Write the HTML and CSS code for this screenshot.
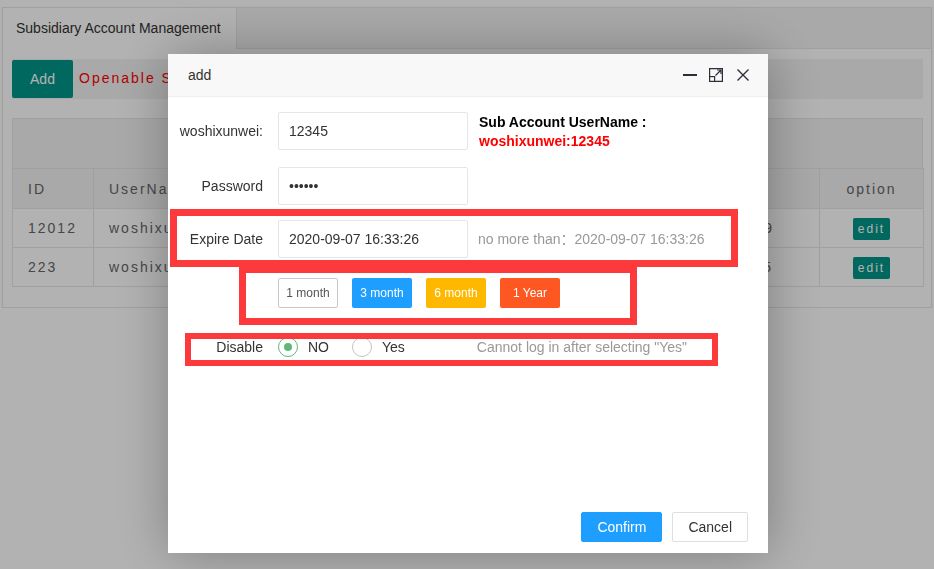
FILE: index.html
```html
<!DOCTYPE html>
<html>
<head>
    <meta name="viewport" content="width=device-width, initial-scale=1.0">
    <title>Subsidiary Account Management</title>
    <link rel="stylesheet" href="styles.css">
</head>
<body>
    <!-- Page behind the dialog -->
    <div class="card">
        <div class="tab-bar">
            <div class="tab active">Subsidiary Account Management</div>
        </div>
        <div class="card-body">
            <div class="toolbar">
                <button class="btn-add">Add</button>
                <span class="notice">Openable Subaccount Number: 10&nbsp;&nbsp;&nbsp;&nbsp;Main Account Expire Date: 2020-09-07 16:33:26</span>
            </div>

            <div class="grid-top"></div>
            <table class="grid">
                <colgroup>
                    <col style="width: 81px">
                    <col style="width: 250px">
                    <col style="width: 247px">
                    <col style="width: 229px">
                    <col style="width: 104px">
                </colgroup>
                <thead>
                    <tr>
                        <th>ID</th>
                        <th>UserName</th>
                        <th>Remark</th>
                        <th></th>
                        <th class="center">option</th>
                    </tr>
                </thead>
                <tbody>
                    <tr>
                        <td>12012</td>
                        <td>woshixunwei:888</td>
                        <td>test</td>
                        <td>2020-09-05 16:32:39</td>
                        <td class="center"><button class="btn-edit">edit</button></td>
                    </tr>
                    <tr>
                        <td>223</td>
                        <td>woshixunwei:666</td>
                        <td>test</td>
                        <td>2020-09-04 10:11:45</td>
                        <td class="center"><button class="btn-edit">edit</button></td>
                    </tr>
                </tbody>
            </table>
        </div>
    </div>

    <div class="shade"></div>

    <!-- Add dialog -->
    <div class="dialog">
        <div class="dlg-title">
            <span>add</span>
            <div class="dlg-tools">
                <svg width="14" height="14" viewBox="0 0 14 14"><rect x="0" y="6" width="14" height="2" fill="#2e2d3c"/></svg>
                <svg width="14" height="14" viewBox="0 0 14 14" fill="none" stroke="#2e2d3c" stroke-width="1.2">
                    <path d="M0.6 8 V0.6 H13.4 V13.4 H5.6"/>
                    <rect x="0.6" y="8.6" width="5" height="4.8"/>
                    <path d="M6.5 7.5 L12 2 M8 2 H12 V6"/>
                </svg>
                <svg width="12" height="12" viewBox="0 0 12 12" stroke="#2e2d3c" stroke-width="1.4"><path d="M0.5 0.5 L11.5 11.5 M11.5 0.5 L0.5 11.5"/></svg>
            </div>
        </div>

        <div class="dlg-body">
            <div class="form-row row-user">
                <label class="form-label">woshixunwei:</label>
                <input class="form-input" type="text" value="12345">
                <div class="sub-name">
                    <div>Sub Account UserName :</div>
                    <div class="sub-value">woshixunwei:12345</div>
                </div>
            </div>
            <div class="form-row row-pass">
                <label class="form-label">Password</label>
                <input class="form-input" type="password" value="123456">
            </div>
            <div class="form-row row-date">
                <label class="form-label">Expire Date</label>
                <input class="form-input" type="text" value="2020-09-07 16:33:26">
                <span class="form-hint">no more than：2020-09-07 16:33:26</span>
            </div>
            <div class="form-row row-quick">
                <button class="btn-sm plain">1 month</button>
                <button class="btn-sm blue">3 month</button>
                <button class="btn-sm orange">6 month</button>
                <button class="btn-sm red">1 Year</button>
            </div>
            <div class="form-row row-disable">
                <label class="form-label">Disable</label>
                <span class="radio checked"><i></i>NO</span>
                <span class="radio"><i></i>Yes</span>
                <span class="form-hint radio-hint">Cannot log in after selecting "Yes"</span>
            </div>

            <!-- red marks drawn on the screenshot -->
            <div class="mark mark-date"></div>
            <div class="mark mark-quick"></div>
            <div class="mark mark-disable"></div>
        </div>

        <div class="dlg-foot">
            <button class="btn-confirm">Confirm</button>
            <button class="btn-cancel">Cancel</button>
        </div>
    </div>
</body>
</html>
```

FILE: styles.css
```css
body {
    margin: 0;
    background-color: #fff;
    font-family: "Liberation Sans", Arial, "Noto Sans CJK SC", sans-serif;
    font-size: 14px;
    color: #333;
}

button {
    font-family: inherit;
    cursor: pointer;
}

/* Card behind the shade */
.card {
    margin: 7px 2px 0;
    border: 1px solid #e6e6e6;
    background-color: #fff;
    box-shadow: 0 1px 2px rgba(0, 0, 0, 0.08);
}

.tab-bar {
    height: 40px;
    background-color: #f2f2f2;
    border-bottom: 1px solid #e6e6e6;
    display: flex;
}

.tab {
    padding: 0 15px 0 13px;
    line-height: 40px;
    color: #333;
}

.tab.active {
    background-color: #fff;
    border-right: 1px solid #e6e6e6;
    height: 41px;
}

.card-body {
    padding: 10px 8px 20px 9px;
}

.toolbar {
    height: 40px;
    background-color: #f2f2f2;
    display: flex;
    align-items: center;
}

.btn-add {
    height: 38px;
    width: 61px;
    border: none;
    border-radius: 2px;
    background-color: #009688;
    color: #fff;
    font-size: 14px;
}

.notice {
    margin-left: 6px;
    margin-top: -3px;
    color: #ff0000;
    letter-spacing: 2px;
}

.grid-top {
    margin-top: 19px;
    height: 49px;
    background-color: #f2f2f2;
    border: 1px solid #e6e6e6;
    border-bottom: none;
}

.grid {
    width: 100%;
    border-collapse: collapse;
    table-layout: fixed;
    color: #666;
    letter-spacing: 2px;
}

.grid th, .grid td {
    border: 1px solid #e6e6e6;
    padding: 5px 15px;
    line-height: 28px;
    text-align: left;
    font-weight: normal;
    white-space: nowrap;
    overflow: hidden;
}

.grid th {
    background-color: #f2f2f2;
    padding: 6px 15px 5px;
}

.grid .center {
    text-align: center;
}

.btn-edit {
    height: 22px;
    padding: 0 5px;
    border: none;
    border-radius: 2px;
    background-color: #009688;
    color: #fff;
    font-size: 12px;
    letter-spacing: 2px;
    vertical-align: middle;
}

/* Shade and dialog */
.shade {
    position: fixed;
    top: 0;
    left: 0;
    right: 0;
    bottom: 0;
    background-color: rgba(0, 0, 0, 0.3);
}

.dialog {
    position: fixed;
    left: 168px;
    top: 54px;
    width: 600px;
    height: 499px;
    background-color: #fff;
    box-shadow: 1px 1px 50px rgba(0, 0, 0, 0.3);
    display: flex;
    flex-direction: column;
}

.dlg-title {
    height: 42px;
    background-color: #f8f8f8;
    border-bottom: 1px solid #eee;
    padding: 0 19px 0 20px;
    display: flex;
    align-items: center;
    justify-content: space-between;
    color: #333;
}

.dlg-tools {
    display: flex;
    align-items: center;
    gap: 12px;
}

.dlg-tools svg:last-child {
    margin-left: 2px;
}

.dlg-body {
    flex: 1;
    position: relative;
    padding-top: 15px;
}

.form-row {
    display: flex;
    align-items: flex-start;
}

.row-user {
    height: 38px;
    margin-bottom: 17px;
}

.row-pass {
    margin-bottom: 15px;
}

.row-date {
    margin-bottom: 20px;
}

.row-quick {
    padding-left: 110px;
    gap: 14px;
    margin-bottom: 20px;
}

.form-label {
    width: 95px;
    margin-right: 15px;
    text-align: right;
    line-height: 38px;
    color: #333;
}

.form-input {
    width: 190px;
    height: 38px;
    box-sizing: border-box;
    border: 1px solid #e6e6e6;
    border-radius: 2px;
    padding: 0 10px;
    font-family: inherit;
    font-size: 14px;
    color: #333;
    outline: none;
}

.sub-name {
    margin-left: 11px;
    padding-top: 1px;
    line-height: 19px;
    font-weight: bold;
    color: #000;
}

.sub-value {
    color: #ff0000;
}

.form-hint {
    margin-left: 10px;
    line-height: 38px;
    color: #999;
}

.btn-sm {
    width: 60px;
    height: 30px;
    padding: 0;
    border: 1px solid transparent;
    border-radius: 2px;
    font-size: 12px;
    color: #fff;
}

.btn-sm.plain {
    background-color: #fff;
    border-color: #c9c9c9;
    color: #555;
}

.btn-sm.blue {
    background-color: #1e9fff;
}

.btn-sm.orange {
    background-color: #ffb800;
}

.btn-sm.red {
    background-color: #ff5722;
}

.row-disable {
    align-items: center;
    height: 38px;
}

.radio {
    display: flex;
    align-items: center;
    margin-right: 23px;
    color: #333;
}

.radio i {
    width: 18px;
    height: 18px;
    border: 1px solid #c2c2c2;
    border-radius: 50%;
    margin-right: 10px;
    position: relative;
}

.radio.checked i {
    border-color: #5fb878;
}

.radio.checked i::after {
    content: "";
    position: absolute;
    left: 5px;
    top: 5px;
    width: 8px;
    height: 8px;
    border-radius: 50%;
    background-color: #5fb878;
}

.radio-hint {
    margin-left: 49px;
}

/* red annotation frames */
.mark {
    position: absolute;
    border: 7px solid #fc3a3b;
    box-sizing: border-box;
}

.mark-date {
    left: 2px;
    top: 112px;
    width: 568px;
    height: 58px;
}

.mark-quick {
    left: 71px;
    top: 169px;
    width: 398px;
    height: 59px;
}

.mark-disable {
    left: 17px;
    top: 236px;
    width: 533px;
    height: 33px;
    border-width: 6px;
}

.dlg-foot {
    display: flex;
    justify-content: flex-end;
    gap: 10px;
    padding: 0 20px 11px;
}

.btn-confirm, .btn-cancel {
    height: 30px;
    padding: 0 15px;
    border-radius: 2px;
    font-size: 14px;
}

.btn-confirm {
    border: 1px solid #1e9fff;
    background-color: #1e9fff;
    color: #fff;
}

.btn-cancel {
    border: 1px solid #dedede;
    background-color: #fff;
    color: #333;
}
```
